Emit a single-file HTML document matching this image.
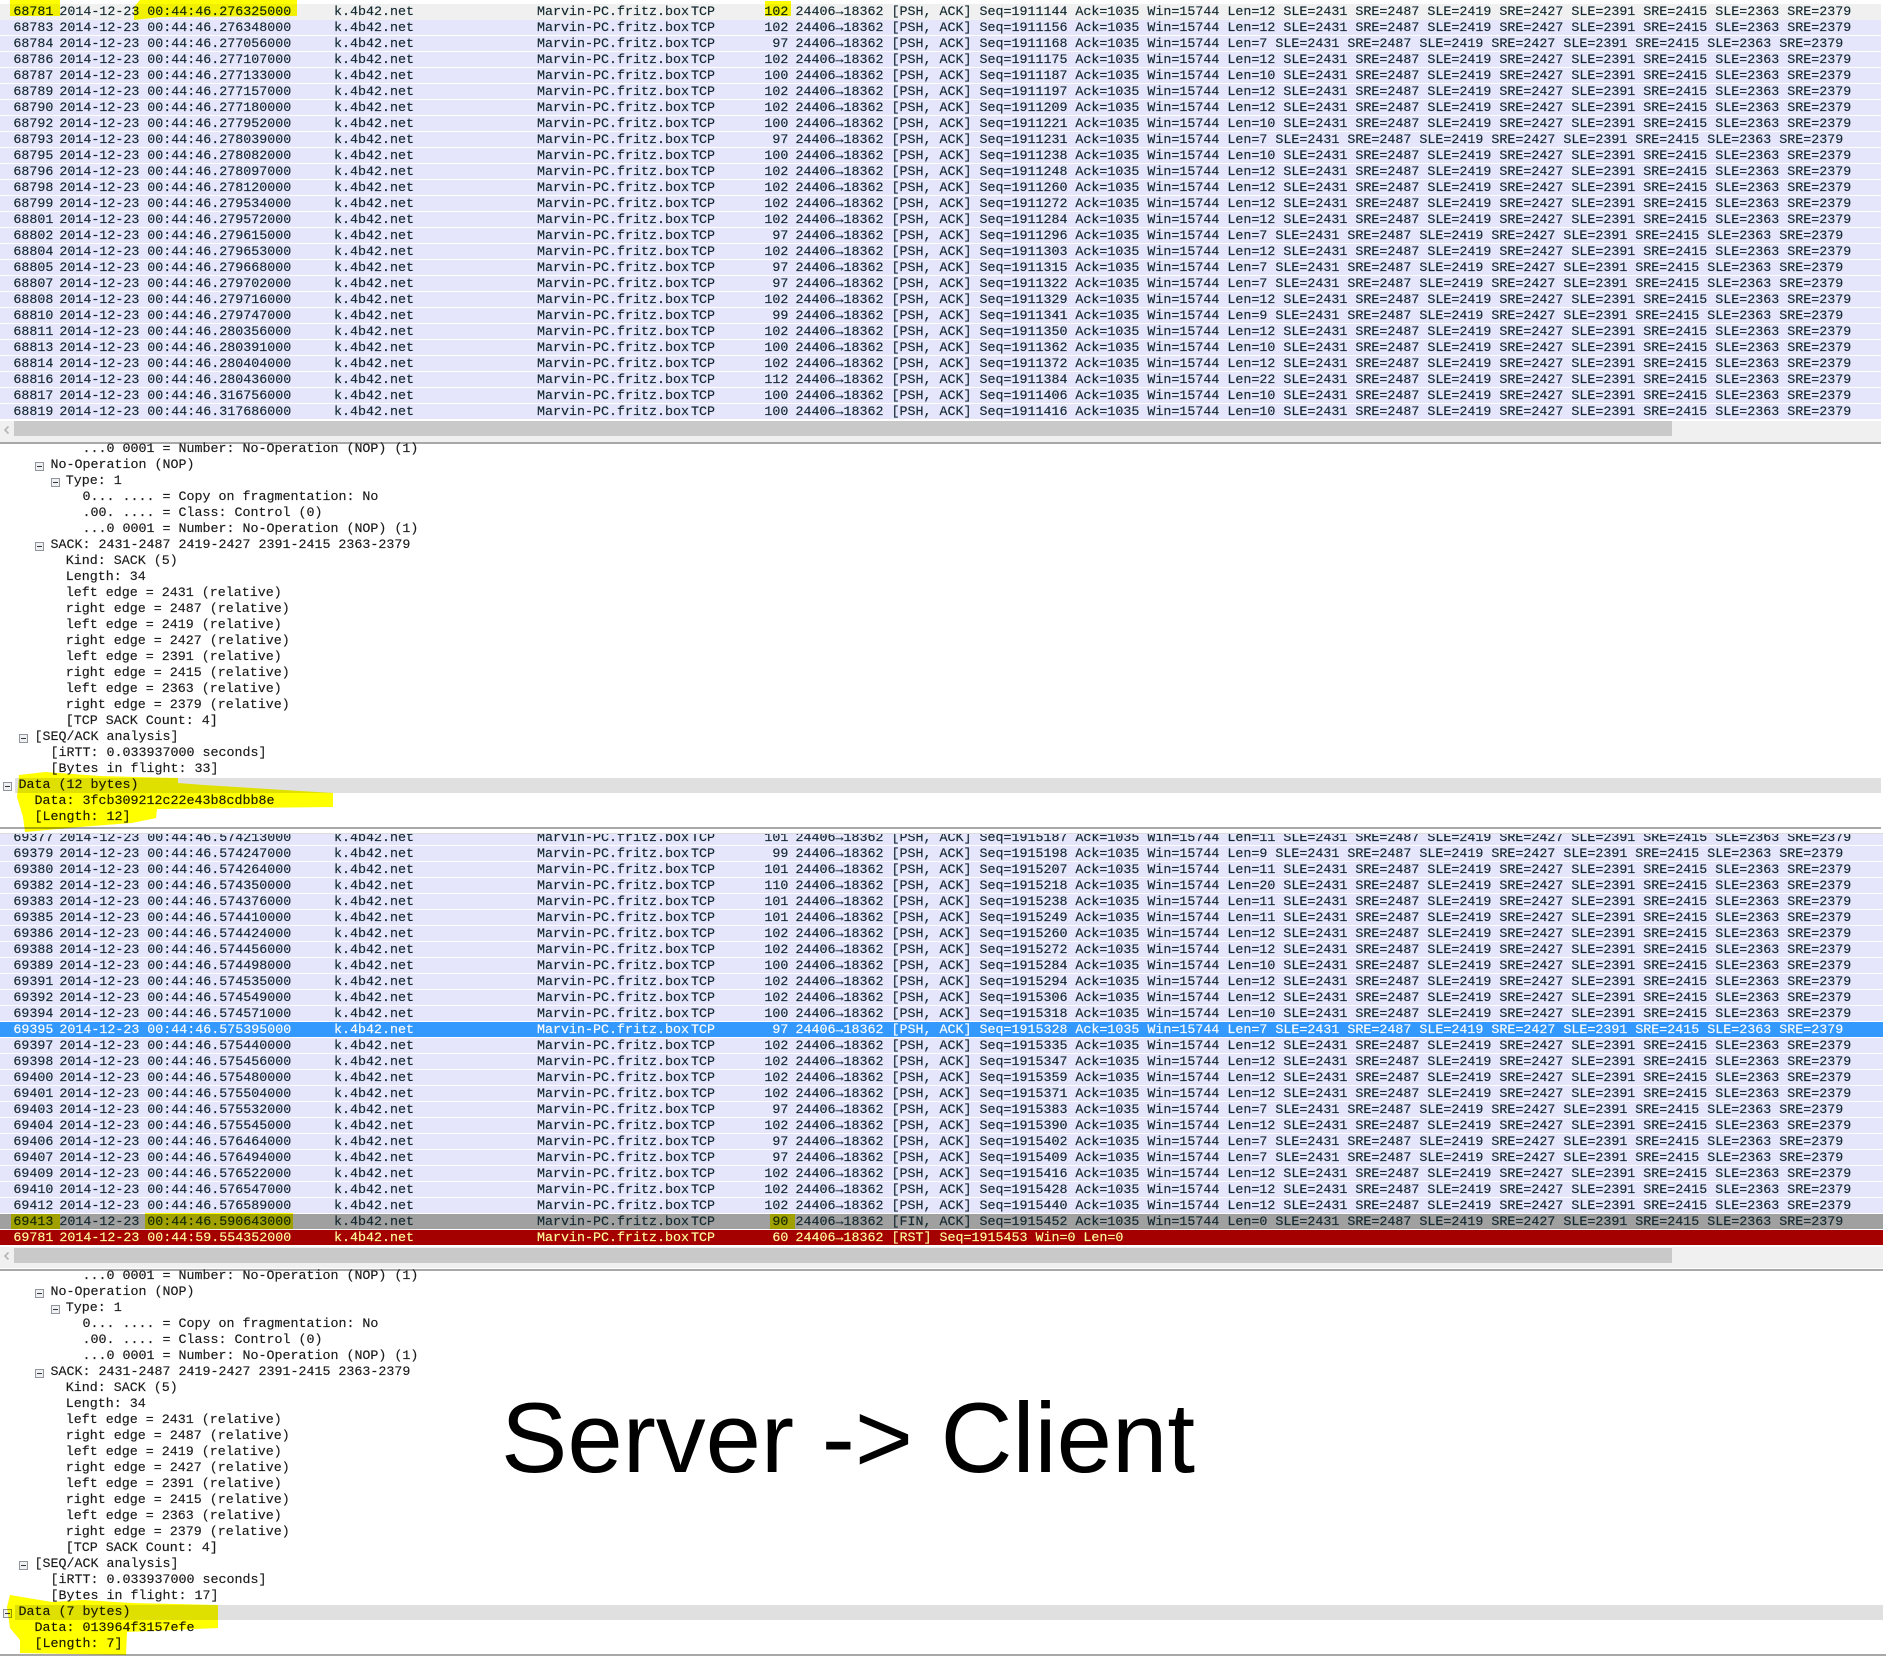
<!DOCTYPE html>
<html><head><meta charset="utf-8"><title>Server -> Client</title>
<style>
html,body{margin:0;padding:0;background:#fff}
#p{position:relative;width:1886px;height:1656px;overflow:hidden;background:#fff;font-family:"Liberation Mono",monospace;font-size:13.33px;color:#12272e;-webkit-text-stroke:.15px currentColor}
.t{position:absolute;left:0;overflow:hidden}
.r{position:relative;height:15px;margin-bottom:1px;background:#e5e5fc;line-height:15px;white-space:pre}
.r u{position:absolute;top:1px;text-decoration:none}
.r u:nth-child(1){left:13.4px}
.r u:nth-child(2){left:59.4px}
.r u:nth-child(3){left:147.3px}
.r u:nth-child(4){left:334px}
.r u:nth-child(5){left:537px}
.r u:nth-child(6){left:691px}
.r u:nth-child(7){left:740px;width:48.4px;text-align:right}
.r u:nth-child(8){left:795.5px}
.f{background:#f0f0f0;margin-bottom:0;height:16px}
.s{background:#3399ff;color:#fff}
.g{background:#a0a0a0}
.x{background:#a40000;color:#fffc9c}
.sb{position:absolute;left:0;height:21px;background:#f0f0f0}
.sb i{position:absolute;left:14px;top:0;width:1658px;height:15px;background:#c9c9c9}
.sb svg{position:absolute;left:2px;top:3px}
.ln{position:absolute;left:0;height:1.5px;background:#a8a8a8}
.d{position:absolute;left:0;width:1881px;line-height:16px;color:#1a1a1a}
.d div{height:16px;position:relative;white-space:pre}
.d .l0{padding-left:18.5px}.d .l1{padding-left:34.5px}.d .l2{padding-left:50.5px}.d .l3{padding-left:65.8px}.d .l4{padding-left:82.5px}
.d b{position:absolute;top:4px;width:7px;height:7px;border:1px solid #8f959b;background:#eef0f2;font-weight:normal}
.d b::after{content:"";position:absolute;left:1px;right:1px;top:3px;height:1px;background:#333}
.d .l0 b{left:2.5px}.d .l1 b{left:18.5px}.d .l2 b{left:34.5px}.d .l3 b{left:50.5px}
.bd{position:absolute;left:15px;width:1866px;height:15px;background:#e0e0e0}
#o{position:absolute;left:0;top:0;mix-blend-mode:multiply;pointer-events:none}
#h{position:absolute;left:0;top:0}
</style></head><body><div id="p">

<div class="t" style="top:4px;width:1881px;height:416px">
<div class="r f"><u>68781</u><u>2014-12-23</u><u>00:44:46.276325000</u><u>k.4b42.net</u><u>Marvin-PC.fritz.box</u><u>TCP</u><u>102</u><u>24406→18362 [PSH, ACK] Seq=1911144 Ack=1035 Win=15744 Len=12 SLE=2431 SRE=2487 SLE=2419 SRE=2427 SLE=2391 SRE=2415 SLE=2363 SRE=2379</u></div>
<div class="r"><u>68783</u><u>2014-12-23</u><u>00:44:46.276348000</u><u>k.4b42.net</u><u>Marvin-PC.fritz.box</u><u>TCP</u><u>102</u><u>24406→18362 [PSH, ACK] Seq=1911156 Ack=1035 Win=15744 Len=12 SLE=2431 SRE=2487 SLE=2419 SRE=2427 SLE=2391 SRE=2415 SLE=2363 SRE=2379</u></div>
<div class="r"><u>68784</u><u>2014-12-23</u><u>00:44:46.277056000</u><u>k.4b42.net</u><u>Marvin-PC.fritz.box</u><u>TCP</u><u>97</u><u>24406→18362 [PSH, ACK] Seq=1911168 Ack=1035 Win=15744 Len=7 SLE=2431 SRE=2487 SLE=2419 SRE=2427 SLE=2391 SRE=2415 SLE=2363 SRE=2379</u></div>
<div class="r"><u>68786</u><u>2014-12-23</u><u>00:44:46.277107000</u><u>k.4b42.net</u><u>Marvin-PC.fritz.box</u><u>TCP</u><u>102</u><u>24406→18362 [PSH, ACK] Seq=1911175 Ack=1035 Win=15744 Len=12 SLE=2431 SRE=2487 SLE=2419 SRE=2427 SLE=2391 SRE=2415 SLE=2363 SRE=2379</u></div>
<div class="r"><u>68787</u><u>2014-12-23</u><u>00:44:46.277133000</u><u>k.4b42.net</u><u>Marvin-PC.fritz.box</u><u>TCP</u><u>100</u><u>24406→18362 [PSH, ACK] Seq=1911187 Ack=1035 Win=15744 Len=10 SLE=2431 SRE=2487 SLE=2419 SRE=2427 SLE=2391 SRE=2415 SLE=2363 SRE=2379</u></div>
<div class="r"><u>68789</u><u>2014-12-23</u><u>00:44:46.277157000</u><u>k.4b42.net</u><u>Marvin-PC.fritz.box</u><u>TCP</u><u>102</u><u>24406→18362 [PSH, ACK] Seq=1911197 Ack=1035 Win=15744 Len=12 SLE=2431 SRE=2487 SLE=2419 SRE=2427 SLE=2391 SRE=2415 SLE=2363 SRE=2379</u></div>
<div class="r"><u>68790</u><u>2014-12-23</u><u>00:44:46.277180000</u><u>k.4b42.net</u><u>Marvin-PC.fritz.box</u><u>TCP</u><u>102</u><u>24406→18362 [PSH, ACK] Seq=1911209 Ack=1035 Win=15744 Len=12 SLE=2431 SRE=2487 SLE=2419 SRE=2427 SLE=2391 SRE=2415 SLE=2363 SRE=2379</u></div>
<div class="r"><u>68792</u><u>2014-12-23</u><u>00:44:46.277952000</u><u>k.4b42.net</u><u>Marvin-PC.fritz.box</u><u>TCP</u><u>100</u><u>24406→18362 [PSH, ACK] Seq=1911221 Ack=1035 Win=15744 Len=10 SLE=2431 SRE=2487 SLE=2419 SRE=2427 SLE=2391 SRE=2415 SLE=2363 SRE=2379</u></div>
<div class="r"><u>68793</u><u>2014-12-23</u><u>00:44:46.278039000</u><u>k.4b42.net</u><u>Marvin-PC.fritz.box</u><u>TCP</u><u>97</u><u>24406→18362 [PSH, ACK] Seq=1911231 Ack=1035 Win=15744 Len=7 SLE=2431 SRE=2487 SLE=2419 SRE=2427 SLE=2391 SRE=2415 SLE=2363 SRE=2379</u></div>
<div class="r"><u>68795</u><u>2014-12-23</u><u>00:44:46.278082000</u><u>k.4b42.net</u><u>Marvin-PC.fritz.box</u><u>TCP</u><u>100</u><u>24406→18362 [PSH, ACK] Seq=1911238 Ack=1035 Win=15744 Len=10 SLE=2431 SRE=2487 SLE=2419 SRE=2427 SLE=2391 SRE=2415 SLE=2363 SRE=2379</u></div>
<div class="r"><u>68796</u><u>2014-12-23</u><u>00:44:46.278097000</u><u>k.4b42.net</u><u>Marvin-PC.fritz.box</u><u>TCP</u><u>102</u><u>24406→18362 [PSH, ACK] Seq=1911248 Ack=1035 Win=15744 Len=12 SLE=2431 SRE=2487 SLE=2419 SRE=2427 SLE=2391 SRE=2415 SLE=2363 SRE=2379</u></div>
<div class="r"><u>68798</u><u>2014-12-23</u><u>00:44:46.278120000</u><u>k.4b42.net</u><u>Marvin-PC.fritz.box</u><u>TCP</u><u>102</u><u>24406→18362 [PSH, ACK] Seq=1911260 Ack=1035 Win=15744 Len=12 SLE=2431 SRE=2487 SLE=2419 SRE=2427 SLE=2391 SRE=2415 SLE=2363 SRE=2379</u></div>
<div class="r"><u>68799</u><u>2014-12-23</u><u>00:44:46.279534000</u><u>k.4b42.net</u><u>Marvin-PC.fritz.box</u><u>TCP</u><u>102</u><u>24406→18362 [PSH, ACK] Seq=1911272 Ack=1035 Win=15744 Len=12 SLE=2431 SRE=2487 SLE=2419 SRE=2427 SLE=2391 SRE=2415 SLE=2363 SRE=2379</u></div>
<div class="r"><u>68801</u><u>2014-12-23</u><u>00:44:46.279572000</u><u>k.4b42.net</u><u>Marvin-PC.fritz.box</u><u>TCP</u><u>102</u><u>24406→18362 [PSH, ACK] Seq=1911284 Ack=1035 Win=15744 Len=12 SLE=2431 SRE=2487 SLE=2419 SRE=2427 SLE=2391 SRE=2415 SLE=2363 SRE=2379</u></div>
<div class="r"><u>68802</u><u>2014-12-23</u><u>00:44:46.279615000</u><u>k.4b42.net</u><u>Marvin-PC.fritz.box</u><u>TCP</u><u>97</u><u>24406→18362 [PSH, ACK] Seq=1911296 Ack=1035 Win=15744 Len=7 SLE=2431 SRE=2487 SLE=2419 SRE=2427 SLE=2391 SRE=2415 SLE=2363 SRE=2379</u></div>
<div class="r"><u>68804</u><u>2014-12-23</u><u>00:44:46.279653000</u><u>k.4b42.net</u><u>Marvin-PC.fritz.box</u><u>TCP</u><u>102</u><u>24406→18362 [PSH, ACK] Seq=1911303 Ack=1035 Win=15744 Len=12 SLE=2431 SRE=2487 SLE=2419 SRE=2427 SLE=2391 SRE=2415 SLE=2363 SRE=2379</u></div>
<div class="r"><u>68805</u><u>2014-12-23</u><u>00:44:46.279668000</u><u>k.4b42.net</u><u>Marvin-PC.fritz.box</u><u>TCP</u><u>97</u><u>24406→18362 [PSH, ACK] Seq=1911315 Ack=1035 Win=15744 Len=7 SLE=2431 SRE=2487 SLE=2419 SRE=2427 SLE=2391 SRE=2415 SLE=2363 SRE=2379</u></div>
<div class="r"><u>68807</u><u>2014-12-23</u><u>00:44:46.279702000</u><u>k.4b42.net</u><u>Marvin-PC.fritz.box</u><u>TCP</u><u>97</u><u>24406→18362 [PSH, ACK] Seq=1911322 Ack=1035 Win=15744 Len=7 SLE=2431 SRE=2487 SLE=2419 SRE=2427 SLE=2391 SRE=2415 SLE=2363 SRE=2379</u></div>
<div class="r"><u>68808</u><u>2014-12-23</u><u>00:44:46.279716000</u><u>k.4b42.net</u><u>Marvin-PC.fritz.box</u><u>TCP</u><u>102</u><u>24406→18362 [PSH, ACK] Seq=1911329 Ack=1035 Win=15744 Len=12 SLE=2431 SRE=2487 SLE=2419 SRE=2427 SLE=2391 SRE=2415 SLE=2363 SRE=2379</u></div>
<div class="r"><u>68810</u><u>2014-12-23</u><u>00:44:46.279747000</u><u>k.4b42.net</u><u>Marvin-PC.fritz.box</u><u>TCP</u><u>99</u><u>24406→18362 [PSH, ACK] Seq=1911341 Ack=1035 Win=15744 Len=9 SLE=2431 SRE=2487 SLE=2419 SRE=2427 SLE=2391 SRE=2415 SLE=2363 SRE=2379</u></div>
<div class="r"><u>68811</u><u>2014-12-23</u><u>00:44:46.280356000</u><u>k.4b42.net</u><u>Marvin-PC.fritz.box</u><u>TCP</u><u>102</u><u>24406→18362 [PSH, ACK] Seq=1911350 Ack=1035 Win=15744 Len=12 SLE=2431 SRE=2487 SLE=2419 SRE=2427 SLE=2391 SRE=2415 SLE=2363 SRE=2379</u></div>
<div class="r"><u>68813</u><u>2014-12-23</u><u>00:44:46.280391000</u><u>k.4b42.net</u><u>Marvin-PC.fritz.box</u><u>TCP</u><u>100</u><u>24406→18362 [PSH, ACK] Seq=1911362 Ack=1035 Win=15744 Len=10 SLE=2431 SRE=2487 SLE=2419 SRE=2427 SLE=2391 SRE=2415 SLE=2363 SRE=2379</u></div>
<div class="r"><u>68814</u><u>2014-12-23</u><u>00:44:46.280404000</u><u>k.4b42.net</u><u>Marvin-PC.fritz.box</u><u>TCP</u><u>102</u><u>24406→18362 [PSH, ACK] Seq=1911372 Ack=1035 Win=15744 Len=12 SLE=2431 SRE=2487 SLE=2419 SRE=2427 SLE=2391 SRE=2415 SLE=2363 SRE=2379</u></div>
<div class="r"><u>68816</u><u>2014-12-23</u><u>00:44:46.280436000</u><u>k.4b42.net</u><u>Marvin-PC.fritz.box</u><u>TCP</u><u>112</u><u>24406→18362 [PSH, ACK] Seq=1911384 Ack=1035 Win=15744 Len=22 SLE=2431 SRE=2487 SLE=2419 SRE=2427 SLE=2391 SRE=2415 SLE=2363 SRE=2379</u></div>
<div class="r"><u>68817</u><u>2014-12-23</u><u>00:44:46.316756000</u><u>k.4b42.net</u><u>Marvin-PC.fritz.box</u><u>TCP</u><u>100</u><u>24406→18362 [PSH, ACK] Seq=1911406 Ack=1035 Win=15744 Len=10 SLE=2431 SRE=2487 SLE=2419 SRE=2427 SLE=2391 SRE=2415 SLE=2363 SRE=2379</u></div>
<div class="r"><u>68819</u><u>2014-12-23</u><u>00:44:46.317686000</u><u>k.4b42.net</u><u>Marvin-PC.fritz.box</u><u>TCP</u><u>100</u><u>24406→18362 [PSH, ACK] Seq=1911416 Ack=1035 Win=15744 Len=10 SLE=2431 SRE=2487 SLE=2419 SRE=2427 SLE=2391 SRE=2415 SLE=2363 SRE=2379</u></div>
</div>
<div class="sb" style="top:421px;width:1881px"><i></i><svg width="10" height="12"><path d="M6.5 2.5L3 6l3.5 3.5" fill="none" stroke="#b5b5b5" stroke-width="1.6"/></svg></div>
<div class="ln" style="top:442px;width:1881px"></div>

<div class="d" style="top:442px">
<div class="l4">...0 0001 = Number: No-Operation (NOP) (1)</div>
<div class="l2"><b></b>No-Operation (NOP)</div>
<div class="l3"><b></b>Type: 1</div>
<div class="l4">0... .... = Copy on fragmentation: No</div>
<div class="l4">.00. .... = Class: Control (0)</div>
<div class="l4">...0 0001 = Number: No-Operation (NOP) (1)</div>
<div class="l2"><b></b>SACK: 2431-2487 2419-2427 2391-2415 2363-2379</div>
<div class="l3">Kind: SACK (5)</div>
<div class="l3">Length: 34</div>
<div class="l3">left edge = 2431 (relative)</div>
<div class="l3">right edge = 2487 (relative)</div>
<div class="l3">left edge = 2419 (relative)</div>
<div class="l3">right edge = 2427 (relative)</div>
<div class="l3">left edge = 2391 (relative)</div>
<div class="l3">right edge = 2415 (relative)</div>
<div class="l3">left edge = 2363 (relative)</div>
<div class="l3">right edge = 2379 (relative)</div>
<div class="l3">[TCP SACK Count: 4]</div>
<div class="l1"><b></b>[SEQ/ACK analysis]</div>
<div class="l2">[iRTT: 0.033937000 seconds]</div>
<div class="l2">[Bytes in flight: 33]</div>
<div class="l0"><span class="bd" style="top:0"></span><b></b><span style="position:relative">Data (12 bytes)</span></div>
<div class="l1">Data: 3fcb309212c22e43b8cdbb8e</div>
<div class="l1">[Length: 12]</div>
</div>
<div class="ln" style="top:827px;width:1881px"></div>
<div class="ln" style="top:833px;width:1883px;height:1px;background:#dcdcdc"></div>

<div class="t" style="top:834px;width:1883px;height:411px"><div style="margin-top:-4px">
<div class="r"><u>69377</u><u>2014-12-23</u><u>00:44:46.574213000</u><u>k.4b42.net</u><u>Marvin-PC.fritz.box</u><u>TCP</u><u>101</u><u>24406→18362 [PSH, ACK] Seq=1915187 Ack=1035 Win=15744 Len=11 SLE=2431 SRE=2487 SLE=2419 SRE=2427 SLE=2391 SRE=2415 SLE=2363 SRE=2379</u></div>
<div class="r"><u>69379</u><u>2014-12-23</u><u>00:44:46.574247000</u><u>k.4b42.net</u><u>Marvin-PC.fritz.box</u><u>TCP</u><u>99</u><u>24406→18362 [PSH, ACK] Seq=1915198 Ack=1035 Win=15744 Len=9 SLE=2431 SRE=2487 SLE=2419 SRE=2427 SLE=2391 SRE=2415 SLE=2363 SRE=2379</u></div>
<div class="r"><u>69380</u><u>2014-12-23</u><u>00:44:46.574264000</u><u>k.4b42.net</u><u>Marvin-PC.fritz.box</u><u>TCP</u><u>101</u><u>24406→18362 [PSH, ACK] Seq=1915207 Ack=1035 Win=15744 Len=11 SLE=2431 SRE=2487 SLE=2419 SRE=2427 SLE=2391 SRE=2415 SLE=2363 SRE=2379</u></div>
<div class="r"><u>69382</u><u>2014-12-23</u><u>00:44:46.574350000</u><u>k.4b42.net</u><u>Marvin-PC.fritz.box</u><u>TCP</u><u>110</u><u>24406→18362 [PSH, ACK] Seq=1915218 Ack=1035 Win=15744 Len=20 SLE=2431 SRE=2487 SLE=2419 SRE=2427 SLE=2391 SRE=2415 SLE=2363 SRE=2379</u></div>
<div class="r"><u>69383</u><u>2014-12-23</u><u>00:44:46.574376000</u><u>k.4b42.net</u><u>Marvin-PC.fritz.box</u><u>TCP</u><u>101</u><u>24406→18362 [PSH, ACK] Seq=1915238 Ack=1035 Win=15744 Len=11 SLE=2431 SRE=2487 SLE=2419 SRE=2427 SLE=2391 SRE=2415 SLE=2363 SRE=2379</u></div>
<div class="r"><u>69385</u><u>2014-12-23</u><u>00:44:46.574410000</u><u>k.4b42.net</u><u>Marvin-PC.fritz.box</u><u>TCP</u><u>101</u><u>24406→18362 [PSH, ACK] Seq=1915249 Ack=1035 Win=15744 Len=11 SLE=2431 SRE=2487 SLE=2419 SRE=2427 SLE=2391 SRE=2415 SLE=2363 SRE=2379</u></div>
<div class="r"><u>69386</u><u>2014-12-23</u><u>00:44:46.574424000</u><u>k.4b42.net</u><u>Marvin-PC.fritz.box</u><u>TCP</u><u>102</u><u>24406→18362 [PSH, ACK] Seq=1915260 Ack=1035 Win=15744 Len=12 SLE=2431 SRE=2487 SLE=2419 SRE=2427 SLE=2391 SRE=2415 SLE=2363 SRE=2379</u></div>
<div class="r"><u>69388</u><u>2014-12-23</u><u>00:44:46.574456000</u><u>k.4b42.net</u><u>Marvin-PC.fritz.box</u><u>TCP</u><u>102</u><u>24406→18362 [PSH, ACK] Seq=1915272 Ack=1035 Win=15744 Len=12 SLE=2431 SRE=2487 SLE=2419 SRE=2427 SLE=2391 SRE=2415 SLE=2363 SRE=2379</u></div>
<div class="r"><u>69389</u><u>2014-12-23</u><u>00:44:46.574498000</u><u>k.4b42.net</u><u>Marvin-PC.fritz.box</u><u>TCP</u><u>100</u><u>24406→18362 [PSH, ACK] Seq=1915284 Ack=1035 Win=15744 Len=10 SLE=2431 SRE=2487 SLE=2419 SRE=2427 SLE=2391 SRE=2415 SLE=2363 SRE=2379</u></div>
<div class="r"><u>69391</u><u>2014-12-23</u><u>00:44:46.574535000</u><u>k.4b42.net</u><u>Marvin-PC.fritz.box</u><u>TCP</u><u>102</u><u>24406→18362 [PSH, ACK] Seq=1915294 Ack=1035 Win=15744 Len=12 SLE=2431 SRE=2487 SLE=2419 SRE=2427 SLE=2391 SRE=2415 SLE=2363 SRE=2379</u></div>
<div class="r"><u>69392</u><u>2014-12-23</u><u>00:44:46.574549000</u><u>k.4b42.net</u><u>Marvin-PC.fritz.box</u><u>TCP</u><u>102</u><u>24406→18362 [PSH, ACK] Seq=1915306 Ack=1035 Win=15744 Len=12 SLE=2431 SRE=2487 SLE=2419 SRE=2427 SLE=2391 SRE=2415 SLE=2363 SRE=2379</u></div>
<div class="r"><u>69394</u><u>2014-12-23</u><u>00:44:46.574571000</u><u>k.4b42.net</u><u>Marvin-PC.fritz.box</u><u>TCP</u><u>100</u><u>24406→18362 [PSH, ACK] Seq=1915318 Ack=1035 Win=15744 Len=10 SLE=2431 SRE=2487 SLE=2419 SRE=2427 SLE=2391 SRE=2415 SLE=2363 SRE=2379</u></div>
<div class="r s"><u>69395</u><u>2014-12-23</u><u>00:44:46.575395000</u><u>k.4b42.net</u><u>Marvin-PC.fritz.box</u><u>TCP</u><u>97</u><u>24406→18362 [PSH, ACK] Seq=1915328 Ack=1035 Win=15744 Len=7 SLE=2431 SRE=2487 SLE=2419 SRE=2427 SLE=2391 SRE=2415 SLE=2363 SRE=2379</u></div>
<div class="r"><u>69397</u><u>2014-12-23</u><u>00:44:46.575440000</u><u>k.4b42.net</u><u>Marvin-PC.fritz.box</u><u>TCP</u><u>102</u><u>24406→18362 [PSH, ACK] Seq=1915335 Ack=1035 Win=15744 Len=12 SLE=2431 SRE=2487 SLE=2419 SRE=2427 SLE=2391 SRE=2415 SLE=2363 SRE=2379</u></div>
<div class="r"><u>69398</u><u>2014-12-23</u><u>00:44:46.575456000</u><u>k.4b42.net</u><u>Marvin-PC.fritz.box</u><u>TCP</u><u>102</u><u>24406→18362 [PSH, ACK] Seq=1915347 Ack=1035 Win=15744 Len=12 SLE=2431 SRE=2487 SLE=2419 SRE=2427 SLE=2391 SRE=2415 SLE=2363 SRE=2379</u></div>
<div class="r"><u>69400</u><u>2014-12-23</u><u>00:44:46.575480000</u><u>k.4b42.net</u><u>Marvin-PC.fritz.box</u><u>TCP</u><u>102</u><u>24406→18362 [PSH, ACK] Seq=1915359 Ack=1035 Win=15744 Len=12 SLE=2431 SRE=2487 SLE=2419 SRE=2427 SLE=2391 SRE=2415 SLE=2363 SRE=2379</u></div>
<div class="r"><u>69401</u><u>2014-12-23</u><u>00:44:46.575504000</u><u>k.4b42.net</u><u>Marvin-PC.fritz.box</u><u>TCP</u><u>102</u><u>24406→18362 [PSH, ACK] Seq=1915371 Ack=1035 Win=15744 Len=12 SLE=2431 SRE=2487 SLE=2419 SRE=2427 SLE=2391 SRE=2415 SLE=2363 SRE=2379</u></div>
<div class="r"><u>69403</u><u>2014-12-23</u><u>00:44:46.575532000</u><u>k.4b42.net</u><u>Marvin-PC.fritz.box</u><u>TCP</u><u>97</u><u>24406→18362 [PSH, ACK] Seq=1915383 Ack=1035 Win=15744 Len=7 SLE=2431 SRE=2487 SLE=2419 SRE=2427 SLE=2391 SRE=2415 SLE=2363 SRE=2379</u></div>
<div class="r"><u>69404</u><u>2014-12-23</u><u>00:44:46.575545000</u><u>k.4b42.net</u><u>Marvin-PC.fritz.box</u><u>TCP</u><u>102</u><u>24406→18362 [PSH, ACK] Seq=1915390 Ack=1035 Win=15744 Len=12 SLE=2431 SRE=2487 SLE=2419 SRE=2427 SLE=2391 SRE=2415 SLE=2363 SRE=2379</u></div>
<div class="r"><u>69406</u><u>2014-12-23</u><u>00:44:46.576464000</u><u>k.4b42.net</u><u>Marvin-PC.fritz.box</u><u>TCP</u><u>97</u><u>24406→18362 [PSH, ACK] Seq=1915402 Ack=1035 Win=15744 Len=7 SLE=2431 SRE=2487 SLE=2419 SRE=2427 SLE=2391 SRE=2415 SLE=2363 SRE=2379</u></div>
<div class="r"><u>69407</u><u>2014-12-23</u><u>00:44:46.576494000</u><u>k.4b42.net</u><u>Marvin-PC.fritz.box</u><u>TCP</u><u>97</u><u>24406→18362 [PSH, ACK] Seq=1915409 Ack=1035 Win=15744 Len=7 SLE=2431 SRE=2487 SLE=2419 SRE=2427 SLE=2391 SRE=2415 SLE=2363 SRE=2379</u></div>
<div class="r"><u>69409</u><u>2014-12-23</u><u>00:44:46.576522000</u><u>k.4b42.net</u><u>Marvin-PC.fritz.box</u><u>TCP</u><u>102</u><u>24406→18362 [PSH, ACK] Seq=1915416 Ack=1035 Win=15744 Len=12 SLE=2431 SRE=2487 SLE=2419 SRE=2427 SLE=2391 SRE=2415 SLE=2363 SRE=2379</u></div>
<div class="r"><u>69410</u><u>2014-12-23</u><u>00:44:46.576547000</u><u>k.4b42.net</u><u>Marvin-PC.fritz.box</u><u>TCP</u><u>102</u><u>24406→18362 [PSH, ACK] Seq=1915428 Ack=1035 Win=15744 Len=12 SLE=2431 SRE=2487 SLE=2419 SRE=2427 SLE=2391 SRE=2415 SLE=2363 SRE=2379</u></div>
<div class="r"><u>69412</u><u>2014-12-23</u><u>00:44:46.576589000</u><u>k.4b42.net</u><u>Marvin-PC.fritz.box</u><u>TCP</u><u>102</u><u>24406→18362 [PSH, ACK] Seq=1915440 Ack=1035 Win=15744 Len=12 SLE=2431 SRE=2487 SLE=2419 SRE=2427 SLE=2391 SRE=2415 SLE=2363 SRE=2379</u></div>
<div class="r g"><u>69413</u><u>2014-12-23</u><u>00:44:46.590643000</u><u>k.4b42.net</u><u>Marvin-PC.fritz.box</u><u>TCP</u><u>90</u><u>24406→18362 [FIN, ACK] Seq=1915452 Ack=1035 Win=15744 Len=0 SLE=2431 SRE=2487 SLE=2419 SRE=2427 SLE=2391 SRE=2415 SLE=2363 SRE=2379</u></div>
<div class="r x"><u>69781</u><u>2014-12-23</u><u>00:44:59.554352000</u><u>k.4b42.net</u><u>Marvin-PC.fritz.box</u><u>TCP</u><u>60</u><u>24406→18362 [RST] Seq=1915453 Win=0 Len=0</u></div>
</div></div>
<div class="sb" style="top:1247px;width:1883px"><i style="top:1px"></i><svg width="10" height="12"><path d="M6.5 2.5L3 6l3.5 3.5" fill="none" stroke="#b5b5b5" stroke-width="1.6"/></svg></div>
<div class="ln" style="top:1269px;width:1883px"></div>

<div class="d" style="top:1269px;width:1883px">
<div class="l4">...0 0001 = Number: No-Operation (NOP) (1)</div>
<div class="l2"><b></b>No-Operation (NOP)</div>
<div class="l3"><b></b>Type: 1</div>
<div class="l4">0... .... = Copy on fragmentation: No</div>
<div class="l4">.00. .... = Class: Control (0)</div>
<div class="l4">...0 0001 = Number: No-Operation (NOP) (1)</div>
<div class="l2"><b></b>SACK: 2431-2487 2419-2427 2391-2415 2363-2379</div>
<div class="l3">Kind: SACK (5)</div>
<div class="l3">Length: 34</div>
<div class="l3">left edge = 2431 (relative)</div>
<div class="l3">right edge = 2487 (relative)</div>
<div class="l3">left edge = 2419 (relative)</div>
<div class="l3">right edge = 2427 (relative)</div>
<div class="l3">left edge = 2391 (relative)</div>
<div class="l3">right edge = 2415 (relative)</div>
<div class="l3">left edge = 2363 (relative)</div>
<div class="l3">right edge = 2379 (relative)</div>
<div class="l3">[TCP SACK Count: 4]</div>
<div class="l1"><b></b>[SEQ/ACK analysis]</div>
<div class="l2">[iRTT: 0.033937000 seconds]</div>
<div class="l2">[Bytes in flight: 17]</div>
<div class="l0"><span class="bd" style="top:0;width:1868px"></span><b></b><span style="position:relative">Data (7 bytes)</span></div>
<div class="l1">Data: 013964f3157efe</div>
<div class="l1">[Length: 7]</div>
</div>
<div class="ln" style="top:1654px;width:1886px"></div>

<svg id="h" width="1886" height="1656"><text x="501" y="1472" font-family="Liberation Sans, sans-serif" font-size="99" textLength="694" lengthAdjust="spacingAndGlyphs" fill="#000" style="-webkit-text-stroke:0">Server -&gt; Client</text></svg>

<svg id="o" width="1886" height="1656"><g fill="#ffff00">
<path d="M10 0H60V16H10Z"/>
<path d="M134 7L140 0H297V16L160 17L134 20Z"/>
<path d="M765 1H791V16H765Z"/>
<path d="M11 1214H60V1229H11Z"/>
<path d="M145 1213H293V1229H145Z"/>
<path d="M770 1214H795V1229H770Z"/>
<path d="M19 775L45 772L100 776L178 778L178 783L204 785L333 793L333 807L157 809L156 818L132 823L80 827L25 832L23 817L17 797Z"/>
<path d="M10 1595L52 1602L83 1600L133 1603L218 1605L218 1628L127 1632L126 1655L20 1653L20 1640L10 1628L7 1607Z"/>
</g></svg>
</div></body></html>
